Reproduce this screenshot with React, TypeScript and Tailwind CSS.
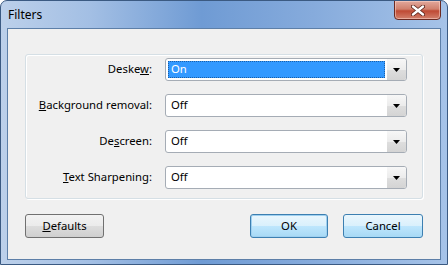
import React from 'react'

const font = { fontFamily: '"Segoe UI", "Noto Sans", "Open Sans", sans-serif' }

function Arrow() {
  return (
    <svg width="7" height="4" viewBox="0 0 7 4" aria-hidden="true">
      <path d="M0 0h7L3.5 4z" fill="#000" />
    </svg>
  )
}

function Combo({ value, selected }: { value: string; selected?: boolean }) {
  return (
    <div className="flex h-[23px] w-[242px] shrink-0 rounded-[3px] border border-[#a5acb5] bg-white">
      <div className="flex flex-1 items-stretch p-[2px]">
        {selected ? (
          <div className="flex flex-1 items-center border border-dotted border-[#1b5fa8] bg-[#3399ff] pl-[2px] text-white">
            {value}
          </div>
        ) : (
          <div className="flex flex-1 items-center pl-[3px] text-black">{value}</div>
        )}
      </div>
      <div className="flex w-[19px] items-center justify-center rounded-r-[2px] bg-[linear-gradient(#f7f7f7,#ececec_50%,#dedede_51%,#d4d4d4)]">
        <Arrow />
      </div>
    </div>
  )
}

function Row({ label, value, selected }: { label: React.ReactNode; value: string; selected?: boolean }) {
  return (
    <div className="flex items-center">
      <div className="w-[126px] shrink-0 whitespace-nowrap text-right text-black">{label}</div>
      <div className="w-[13px] shrink-0" />
      <Combo value={value} selected={selected} />
    </div>
  )
}

function Button({ children, variant }: { children: React.ReactNode; variant: 'gray' | 'ok' | 'blue' }) {
  const cls =
    variant === 'gray'
      ? 'border-[#707070] bg-[linear-gradient(#f2f2f2,#ebebeb_50%,#dddddd_51%,#cfcfcf)]'
      : variant === 'ok'
        ? 'border-[#3c7fb1] bg-[linear-gradient(#eaf6fd,#d9f0fc_50%,#bee6fd_51%,#a7d9f5)] shadow-[inset_0_0_0_1px_#9fd0f0]'
        : 'border-[#3c7fb1] bg-[linear-gradient(#eaf6fd,#d9f0fc_50%,#bee6fd_51%,#a7d9f5)]'
  return (
    <div className={`flex h-[24px] items-center justify-center rounded-[3px] border text-black ${cls}`}>
      {children}
    </div>
  )
}

export default function App() {
  return (
    <div
      className="flex h-[265px] w-[448px] flex-col overflow-hidden rounded-t-[7px] border border-[#3b5a82] bg-[linear-gradient(90deg,#bcd0ea_0%,#a3bfe4_20%,#6f9bd4_45%,#86abdc_70%,#a6c3e8_100%)] text-[11.3px]"
      style={font}
    >
      <div className="flex h-[27px] shrink-0 items-start justify-between">
        <div className="pl-[7px] pt-[5px] text-[12px] text-black">Filters</div>
        <div className="mr-[6px] mt-[-1px] flex h-[20px] w-[47px] items-center justify-center rounded-b-[4px] border border-[#6b2a22] bg-[linear-gradient(#e2a89c,#d0806d_45%,#bf4a34_55%,#d2806c)] shadow-[inset_0_0_0_1px_rgba(255,220,210,0.5)]">
          <svg width="14" height="11" viewBox="0 0 14 11" aria-hidden="true">
            <path d="M2 1.5l10 8M12 1.5l-10 8" stroke="#5a2218" strokeWidth="4" strokeLinecap="round" />
            <path d="M2 1.5l10 8M12 1.5l-10 8" stroke="#fff" strokeWidth="2.4" strokeLinecap="round" />
          </svg>
        </div>
      </div>
      <div className="mx-[6px] mb-[4px] flex flex-1 flex-col border border-[#5d7fa8] bg-[#f0f0f0] pl-[17px] pr-[17px] pt-[25px]">
        <div className="flex h-[145px] flex-col gap-[13px] rounded-[3px] border border-[#d5dfe5] pt-[3px] shadow-[inset_1px_1px_0_#fff,1px_1px_0_#fff]">
          <Row label={<>Deske<u>w</u>:</>} value="On" selected />
          <Row label={<><u>B</u>ackground removal:</>} value="Off" />
          <Row label={<>De<u>s</u>creen:</>} value="Off" />
          <Row label={<><u>T</u>ext Sharpening:</>} value="Off" />
        </div>
        <div className="mt-[15px] flex">
          <div className="w-[79px]">
            <Button variant="gray">
              <span>
                <u>D</u>efaults
              </span>
            </Button>
          </div>
          <div className="flex-1" />
          <div className="w-[78px]">
            <Button variant="ok">OK</Button>
          </div>
          <div className="w-[15px]" />
          <div className="w-[80px]">
            <Button variant="blue">Cancel</Button>
          </div>
        </div>
      </div>
    </div>
  )
}
